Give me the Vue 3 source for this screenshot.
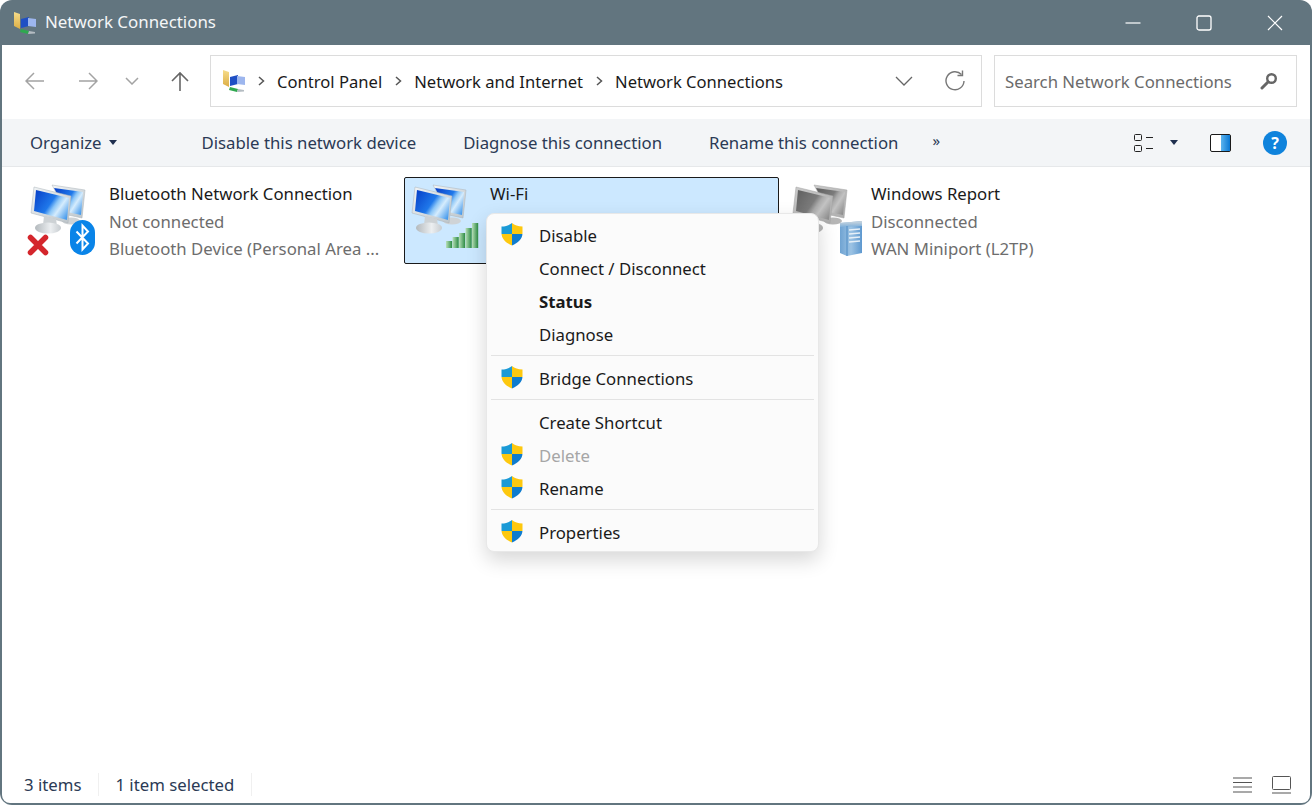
<script setup>
const crumbs = ["Control Panel", "Network and Internet", "Network Connections"];
const commands = ["Disable this network device", "Diagnose this connection", "Rename this connection"];

const connections = [
  { name: "Bluetooth Network Connection", status: "Not connected", device: "Bluetooth Device (Personal Area ...", kind: "bluetooth" },
  { name: "Wi-Fi", status: "", device: "", kind: "wifi", selected: true },
  { name: "Windows Report", status: "Disconnected", device: "WAN Miniport (L2TP)", kind: "wan" },
];

const menuGroups = [
  [
    { label: "Disable", shield: true },
    { label: "Connect / Disconnect" },
    { label: "Status", bold: true },
    { label: "Diagnose" },
  ],
  [{ label: "Bridge Connections", shield: true }],
  [
    { label: "Create Shortcut" },
    { label: "Delete", shield: true, disabled: true },
    { label: "Rename", shield: true },
  ],
  [{ label: "Properties", shield: true }],
];

const bars = [
  { x: 0, h: 7 },
  { x: 6.500, h: 11 },
  { x: 13, h: 15 },
  { x: 19.500, h: 20 },
  { x: 26, h: 25 },
];
</script>

<template>
  <div class="window">
    <!-- shared icons -->
    <svg class="defs" width="0" height="0">
      <defs>
        <linearGradient id="screen" x1="0" y1="0.200" x2="1" y2="0.800">
          <stop offset="0" stop-color="#0a46cc" />
          <stop offset="0.450" stop-color="#1f78ea" />
          <stop offset="0.580" stop-color="#8cc6f7" />
          <stop offset="0.720" stop-color="#d5ecfd" />
          <stop offset="1" stop-color="#4a9cec" />
        </linearGradient>
        <linearGradient id="bezel" x1="0" y1="0" x2="1" y2="1">
          <stop offset="0" stop-color="#f2f5f7" />
          <stop offset="1" stop-color="#bcc4c9" />
        </linearGradient>
        <linearGradient id="base" x1="0" y1="0" x2="1" y2="0">
          <stop offset="0" stop-color="#b3b9bd" />
          <stop offset="0.600" stop-color="#eceff1" />
          <stop offset="1" stop-color="#c7ccd0" />
        </linearGradient>
        <linearGradient id="bar" x1="0" y1="0" x2="1" y2="0">
          <stop offset="0" stop-color="#b9e0b9" />
          <stop offset="1" stop-color="#2a8a42" />
        </linearGradient>
        <linearGradient id="tower" x1="0" y1="0" x2="1" y2="0">
          <stop offset="0" stop-color="#6fa3d2" />
          <stop offset="0.500" stop-color="#9cc3e4" />
          <stop offset="1" stop-color="#5d98cf" />
        </linearGradient>
        <linearGradient id="tower-top" x1="0" y1="0" x2="0" y2="1">
          <stop offset="0" stop-color="#cfd8de" />
          <stop offset="1" stop-color="#7fb0da" />
        </linearGradient>
        <linearGradient id="folder" x1="0" y1="0" x2="0" y2="1">
          <stop offset="0" stop-color="#f6dc8a" />
          <stop offset="1" stop-color="#dcae45" />
        </linearGradient>
        <clipPath id="shield-clip">
          <path d="M12 1C9.500 3.200 6 4.200 1.500 4.600V11C1.500 17 6 21 12 23.500 18 21 22.500 17 22.500 11V4.600C18 4.200 14.500 3.200 12 1Z" />
        </clipPath>
      </defs>
      <symbol id="computers" viewBox="0 0 64 56">
        <path d="M24 2 57 7 54 35 40 32Z" fill="url(#bezel)" stroke="#aab2b8" stroke-width=".5" />
        <path d="M26 5 55 9 53 32 39 29Z" fill="url(#screen)" />
        <ellipse cx="43" cy="38" rx="9" ry="3.500" fill="#cfd3d6" />
        <path d="M6 4 43 13 40 40 3 30Z" fill="url(#bezel)" stroke="#aab2b8" stroke-width=".5" />
        <path d="M8 7 41 15 39 37 6 28Z" fill="url(#screen)" />
        <path d="M16 33 28 36 29 43 15 42Z" fill="#cdd2d5" />
        <ellipse cx="20" cy="45" rx="13" ry="5.500" fill="url(#base)" />
      </symbol>
      <symbol id="shield" viewBox="0 0 24 24">
        <g clip-path="url(#shield-clip)">
          <rect width="12" height="12" fill="#1b9ad6" />
          <rect x="12" width="12" height="12" fill="#fdc80f" />
          <rect y="12" width="12" height="12" fill="#fdc80f" />
          <rect x="12" y="12" width="12" height="12" fill="#0f7ccf" />
        </g>
      </symbol>
      <symbol id="network-folder" viewBox="0 0 24 24">
        <path d="M1 1 7 3V18L1 15Z" fill="url(#folder)" />
        <path d="M8 8 16 6V15L8 17Z" fill="#1f4fc4" />
        <path d="M15 7 23 8V16L15 15Z" fill="#9db6ee" />
        <path d="M8 18 16 20 15 23 7 21Z" fill="#2fa84f" />
        <path d="M16 20 22 21 22 22.500 15 23Z" fill="#b4bcc2" />
      </symbol>
    </svg>

    <header class="title-bar">
      <svg class="title-icon"><use href="#network-folder" /></svg>
      <span class="title-text">Network Connections</span>
      <div class="window-controls">
        <button class="win-btn">
          <svg width="16" height="16" viewBox="0 0 16 16"><path d="M0.500 8H15.500" stroke="#fff" stroke-width="1.200" /></svg>
        </button>
        <button class="win-btn">
          <svg width="16" height="16" viewBox="0 0 16 16"><rect x="1" y="1" width="14" height="14" rx="2" fill="none" stroke="#fff" stroke-width="1.300" /></svg>
        </button>
        <button class="win-btn">
          <svg width="16" height="16" viewBox="0 0 16 16"><path d="M1 1 15 15M15 1 1 15" stroke="#fff" stroke-width="1.200" /></svg>
        </button>
      </div>
    </header>

    <div class="main">
      <div class="address-row">
        <div class="nav-buttons">
          <svg class="nav-back" width="20" height="18" viewBox="0 0 20 18"><path d="M1 9H19M9 1 1 9 9 17" fill="none" stroke="#a3a3a3" stroke-width="1.500" /></svg>
          <svg class="nav-forward" width="20" height="18" viewBox="0 0 20 18"><path d="M1 9H19M11 1 19 9 11 17" fill="none" stroke="#a3a3a3" stroke-width="1.500" /></svg>
          <svg class="nav-down" width="14" height="8" viewBox="0 0 14 8"><path d="M1 1 7 7 13 1" fill="none" stroke="#a3a3a3" stroke-width="1.500" /></svg>
          <svg class="nav-up" width="20" height="20" viewBox="0 0 20 20"><path d="M10 20V2M2 10 10 2 18 10" fill="none" stroke="#666" stroke-width="1.600" /></svg>
        </div>
        <div class="address-box">
          <svg class="address-icon"><use href="#network-folder" /></svg>
          <template v-for="crumb in crumbs" :key="crumb">
            <svg class="crumb-sep" width="7" height="10" viewBox="0 0 7 10"><path d="M1 1 5.500 5 1 9" fill="none" stroke="#555" stroke-width="1.500" /></svg>
            <span class="crumb">{{ crumb }}</span>
          </template>
          <svg class="address-down" width="18" height="10" viewBox="0 0 18 10"><path d="M1 1 9 9 17 1" fill="none" stroke="#666" stroke-width="1.300" /></svg>
          <svg class="refresh" width="22" height="22" viewBox="0 0 22 22"><path d="M17.500 4.500A9 9 0 1 0 20 11" fill="none" stroke="#777" stroke-width="1.400" /><path d="M18.500 0.500V5.500H13.500" fill="none" stroke="#777" stroke-width="1.400" /></svg>
        </div>
        <div class="search-box">
          <span class="search-text">Search Network Connections</span>
          <svg width="18" height="18" viewBox="0 0 18 18"><circle cx="11.500" cy="6.500" r="4.300" fill="none" stroke="#666" stroke-width="2.400" /><path d="M8 10 2 16" stroke="#666" stroke-width="3" stroke-linecap="round" /></svg>
        </div>
      </div>

      <div class="command-bar">
        <span class="cmd organize">Organize<i class="caret"></i></span>
        <span v-for="cmd in commands" :key="cmd" class="cmd">{{ cmd }}</span>
        <span class="more">»</span>
        <div class="cmd-right">
          <svg class="view-icon" width="20" height="18" viewBox="0 0 20 18">
            <rect x="0.500" y="0.500" width="7" height="6" rx="1" fill="none" stroke="#222" />
            <rect x="0.500" y="11.500" width="7" height="6" rx="1" fill="none" stroke="#222" />
            <path d="M12 3.500H19M12 14.500H19" stroke="#222" />
          </svg>
          <i class="caret view-caret"></i>
          <svg class="pane-icon" width="21" height="18" viewBox="0 0 21 18">
            <defs>
              <linearGradient id="pane" x1="0" y1="0" x2="1" y2="0">
                <stop offset="0" stop-color="#5cb4ee" />
                <stop offset="1" stop-color="#0a78d4" />
              </linearGradient>
            </defs>
            <rect x="0.500" y="0.500" width="20" height="17" rx="1.500" fill="#fff" stroke="#1a1a1a" />
            <rect x="11" y="1" width="9" height="16" fill="url(#pane)" />
          </svg>
          <span class="help">?</span>
        </div>
      </div>

      <div class="content">
        <div class="items">
          <div v-for="item in connections" :key="item.name" class="item" :class="{ selected: item.selected }">
            <div class="item-icon">
              <svg class="computers" :class="{ gray: item.kind === 'wan' }"><use href="#computers" /></svg>

              <template v-if="item.kind === 'bluetooth'">
                <svg class="badge-x" width="22" height="22" viewBox="0 0 22 22"><path d="M3.500 3.500 18.500 18.500M18.500 3.500 3.500 18.500" stroke="#d4262c" stroke-width="5.500" stroke-linecap="round" /></svg>
                <svg class="badge-bt" width="25" height="35" viewBox="0 0 25 35">
                  <rect width="25" height="35" rx="12.500" fill="#0a84e8" />
                  <path d="M6.500 11.500 18 23.500 12.500 29.500V5.500L18 11.500 6.500 23.500" fill="none" stroke="#fff" stroke-width="2" />
                </svg>
              </template>

              <svg v-else-if="item.kind === 'wifi'" class="badge-wifi" width="33" height="25" viewBox="0 0 33 25">
                <rect v-for="b in bars" :key="b.x" :x="b.x" :y="25 - b.h" width="6.200" :height="b.h" fill="url(#bar)" />
              </svg>

              <svg v-else class="badge-wan" width="24" height="37" viewBox="0 0 24 37">
                <path d="M1 3 23 1V33L8 36 1 33Z" fill="url(#tower)" />
                <path d="M1 3 23 1V6L1 7Z" fill="url(#tower-top)" />
                <path d="M8 6V36" stroke="#4f8cc4" stroke-width="1" />
                <path d="M10 10 21 9M10 14 21 13M10 18 21 17M10 22 21 21" stroke="#e6f0f8" stroke-width="1.500" />
              </svg>
            </div>
            <div class="item-text">
              <div class="item-name">{{ item.name }}</div>
              <div class="item-sub">{{ item.status }}</div>
              <div class="item-sub">{{ item.device }}</div>
            </div>
          </div>
        </div>

        <!-- right click menu -->
        <div class="context-menu">
          <template v-for="(group, i) in menuGroups" :key="i">
            <div v-if="i > 0" class="menu-sep"></div>
            <div
              v-for="entry in group"
              :key="entry.label"
              class="menu-item"
              :class="{ bold: entry.bold, disabled: entry.disabled }"
            >
              <svg v-if="entry.shield" class="shield"><use href="#shield" /></svg>
              <span class="menu-label">{{ entry.label }}</span>
            </div>
          </template>
        </div>
      </div>

      <footer class="status-bar">
        <span class="status-cell first">3 items</span>
        <span class="status-cell">1 item selected</span>
        <div class="status-right">
          <svg width="19" height="16" viewBox="0 0 19 16"><path d="M0 1H19M0 5.500H19M0 10H19M0 15H19" stroke="#555" stroke-width="1.100" /></svg>
          <svg width="19" height="18" viewBox="0 0 19 18"><rect x="0.500" y="0.500" width="18" height="13" rx="1" fill="none" stroke="#555" /><path d="M0 17H19" stroke="#555" stroke-width="1.100" /></svg>
        </div>
      </footer>
    </div>
  </div>
</template>

<style>
html,
body {
  margin: 0;
  overflow: hidden;
  background: #fff;
}
</style>

<style scoped>
.window {
  position: relative;
  width: 1312px;
  height: 805px;
  display: flex;
  flex-direction: column;
  box-sizing: border-box;
  padding: 0 2px 2px;
  background: #62757f;
  border-radius: 12px;
  font-family: "Noto Sans", "Liberation Sans", sans-serif;
  font-size: 16.750px;
  color: #1a1a1a;
  overflow: hidden;
}

.defs {
  position: absolute;
}

/* title bar */
.title-bar {
  height: 45px;
  flex-shrink: 0;
  display: flex;
  align-items: center;
  color: #fff;
}

.title-icon {
  width: 24px;
  height: 24px;
  margin-left: 11px;
}

.title-text {
  margin-left: 8px;
  margin-bottom: 2px;
  font-size: 16.900px;
  color: #f4f6f7;
}

.window-controls {
  margin-left: auto;
  display: flex;
}

.win-btn {
  width: 71px;
  height: 45px;
  padding: 0;
  border: none;
  background: none;
  display: flex;
  align-items: center;
  justify-content: center;
}

.main {
  flex: 1;
  min-height: 0;
  display: flex;
  flex-direction: column;
  background: #fff;
  border-radius: 0 0 8px 8px;
}

/* address row */
.address-row {
  height: 74px;
  flex-shrink: 0;
  box-sizing: border-box;
  padding: 10px 13px 12px 0;
  display: flex;
  gap: 12px;
}

.nav-buttons {
  width: 196px;
  display: flex;
  align-items: center;
  padding-left: 23px;
  box-sizing: border-box;
}

.nav-forward {
  margin-left: 33px;
}

.nav-down {
  margin-left: 27px;
}

.nav-up {
  margin-left: 31px;
}

.address-box {
  width: 772px;
  box-sizing: border-box;
  border: 1.500px solid #dcdcdc;
  display: flex;
  align-items: center;
  padding-left: 11px;
}

.address-icon {
  width: 24px;
  height: 24px;
  margin-right: 12px;
}

.crumb-sep {
  margin-right: 12px;
}

.crumb {
  margin-right: 13px;
  font-size: 16.600px;
  color: #1a1a1a;
}

.address-down {
  margin-left: auto;
}

.refresh {
  margin-left: 31px;
  margin-right: 15px;
}

.search-box {
  flex: 1;
  box-sizing: border-box;
  border: 1.500px solid #dcdcdc;
  display: flex;
  align-items: center;
  justify-content: space-between;
  padding: 0 18px 0 10px;
}

.search-text {
  color: #6b6b6b;
  padding-top: 1px;
}

/* command bar */
.command-bar {
  height: 48px;
  flex-shrink: 0;
  box-sizing: border-box;
  background: #f3f5f7;
  border-bottom: 1px solid #e6e8ea;
  display: flex;
  align-items: center;
  padding-left: 28px;
  color: #2b3a55;
}

.cmd {
  margin-right: 47px;
  white-space: nowrap;
}

.organize {
  margin-right: 85px;
  display: flex;
  align-items: center;
}

.caret {
  display: inline-block;
  width: 0;
  height: 0;
  margin-left: 7px;
  border-left: 4.500px solid transparent;
  border-right: 4.500px solid transparent;
  border-top: 5px solid #1f2f4f;
}

.more {
  font-size: 15px;
  line-height: 1;
  margin-top: -4px;
  margin-left: -13px;
}

.cmd-right {
  margin-left: auto;
  display: flex;
  align-items: center;
  padding-right: 23px;
}

.view-caret {
  margin-left: 16px;
}

.pane-icon {
  margin-left: 32px;
}

.help {
  width: 24px;
  height: 24px;
  margin-left: 32px;
  border-radius: 50%;
  background: #0f83dc;
  color: #fff;
  font-size: 16px;
  font-weight: 700;
  display: flex;
  align-items: center;
  justify-content: center;
}

/* items */
.content {
  position: relative;
  flex: 1;
  min-height: 0;
}

.items {
  display: grid;
  grid-template-columns: repeat(3, 375px);
  gap: 6px;
  padding: 10px 0 0 21px;
}

.item {
  height: 87px;
  box-sizing: border-box;
  border: 1px solid transparent;
  display: flex;
  padding: 2px 0 0 4px;
}

.item.selected {
  background: #cce8ff;
  border-color: #1a1a1a;
  border-radius: 2px;
}

.item-icon {
  position: relative;
  width: 64px;
  height: 74px;
  margin-right: 17px;
  flex-shrink: 0;
}

.computers {
  position: absolute;
  left: 0;
  top: 3px;
  width: 64px;
  height: 56px;
}

.computers.gray {
  filter: grayscale(1) contrast(0.550) brightness(1.050);
}

.badge-x {
  position: absolute;
  left: -1px;
  top: 54px;
}

.badge-bt {
  position: absolute;
  left: 42px;
  top: 40px;
}

.badge-wifi {
  position: absolute;
  left: 37px;
  top: 43px;
}

.badge-wan {
  position: absolute;
  left: 49px;
  top: 40px;
}

.item-text {
  min-width: 0;
  white-space: nowrap;
}

.item-name,
.item-sub {
  line-height: 27.500px;
  height: 27.500px;
}

.item-sub {
  color: #6d6d6d;
}

/* context menu */
.context-menu {
  position: absolute;
  left: 484px;
  top: 46px;
  width: 333px;
  height: 339px;
  box-sizing: border-box;
  padding: 5px 0 0 1px;
  background: #fbfbfb;
  border: 1px solid #e8e8e8;
  border-radius: 8px;
  box-shadow: 0 8px 20px rgba(0, 0, 0, 0.16);
}

.menu-item {
  position: relative;
  height: 33px;
  display: flex;
  align-items: center;
  padding-left: 51px;
  color: #1a1a1a;
}

.menu-item.bold {
  font-weight: 700;
}

.menu-item.disabled {
  color: #a6a6a6;
}

.shield {
  position: absolute;
  left: 12px;
  top: 3px;
  width: 24px;
  height: 24px;
}

.menu-sep {
  height: 1px;
  margin: 4px 4px 6px 3px;
  background: #e3e3e3;
}

/* status bar */
.status-bar {
  height: 37px;
  flex-shrink: 0;
  display: flex;
  align-items: center;
  padding-left: 22px;
  color: #2b3a55;
}

.status-cell {
  padding-right: 17px;
  margin-right: 16px;
  border-right: 1px solid #f0f0f0;
}

.status-right {
  margin-left: auto;
  display: flex;
  align-items: center;
  gap: 20px;
  padding-right: 19px;
}
</style>
